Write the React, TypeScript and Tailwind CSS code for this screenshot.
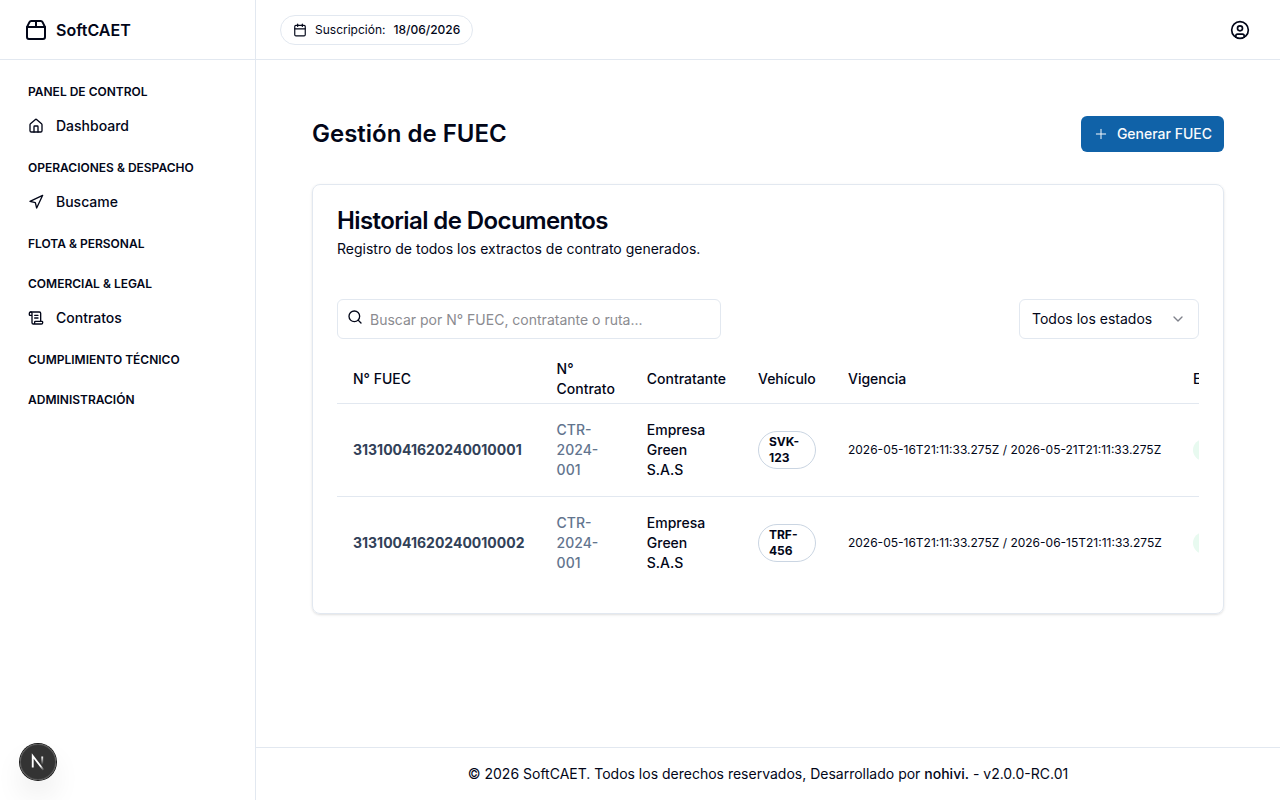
import { Calendar, ChevronDown, CircleUser, Home, Navigation, Package2, Plus, ScrollText, Search } from 'lucide-react'
import type { LucideIcon } from 'lucide-react'

type NavItem = { label: string; icon: LucideIcon }
type NavGroup = { title: string; items: NavItem[] }

type Fuec = {
  numero: string
  contrato: string
  contratante: string
  placa: string
  inicio: string
  fin: string
  estado: string
}

const navGroups: NavGroup[] = [
  { title: 'Panel de Control', items: [{ label: 'Dashboard', icon: Home }] },
  { title: 'Operaciones & Despacho', items: [{ label: 'Buscame', icon: Navigation }] },
  { title: 'Flota & Personal', items: [] },
  { title: 'Comercial & Legal', items: [{ label: 'Contratos', icon: ScrollText }] },
  { title: 'Cumplimiento Técnico', items: [] },
  { title: 'Administración', items: [] },
]

const fuecs: Fuec[] = [
  {
    numero: '31310041620240010001',
    contrato: 'CTR-2024-001',
    contratante: 'Empresa Green S.A.S',
    placa: 'SVK-123',
    inicio: '2026-05-16T21:11:33.275Z',
    fin: '2026-05-21T21:11:33.275Z',
    estado: 'Activo',
  },
  {
    numero: '31310041620240010002',
    contrato: 'CTR-2024-001',
    contratante: 'Empresa Green S.A.S',
    placa: 'TRF-456',
    inicio: '2026-05-16T21:11:33.275Z',
    fin: '2026-06-15T21:11:33.275Z',
    estado: 'Activo',
  },
]

function Sidebar() {
  return (
    <aside className="flex w-64 shrink-0 flex-col border-r border-slate-200">
      <div className="flex h-[60px] items-center gap-2 border-b border-slate-200 px-6 font-semibold">
        <Package2 className="h-6 w-6" />
        <span>SoftCAET</span>
      </div>
      <nav className="flex flex-col gap-2 px-4 py-4 text-sm font-medium">
        {navGroups.map(group => (
          <div key={group.title}>
            <h4 className="flex h-8 items-center px-3 text-xs font-semibold uppercase">{group.title}</h4>
            {group.items.map(item => (
              <a key={item.label} href="#" className="flex h-9 items-center gap-3 rounded-lg px-3">
                <item.icon className="h-4 w-4" />
                {item.label}
              </a>
            ))}
          </div>
        ))}
      </nav>
    </aside>
  )
}

function Header() {
  return (
    <header className="flex h-[60px] shrink-0 items-center justify-between border-b border-slate-200 px-6">
      <div className="flex items-center gap-2 rounded-full border border-slate-200 px-3 py-1.5 text-xs">
        <Calendar className="h-3.5 w-3.5" />
        <span>Suscripción:</span>
        <span className="font-medium">18/06/2026</span>
      </div>
      <button className="flex h-8 w-8 items-center justify-center rounded-full">
        <CircleUser className="h-5 w-5" />
      </button>
    </header>
  )
}

function FuecTable() {
  return (
    <div className="overflow-hidden">
      <table className="w-[1080px] table-fixed text-left text-sm">
        <colgroup>
          <col className="w-[203.6px]" />
          <col className="w-[90.2px]" />
          <col className="w-[111.2px]" />
          <col className="w-[90px]" />
          <col className="w-[345px]" />
          <col />
        </colgroup>
        <thead>
          <tr className="border-b border-slate-200">
            <th className="h-12 px-4 font-medium">N° FUEC</th>
            <th className="h-12 px-4 font-medium">N° Contrato</th>
            <th className="h-12 px-4 font-medium">Contratante</th>
            <th className="h-12 px-4 font-medium">Vehículo</th>
            <th className="h-12 px-4 font-medium">Vigencia</th>
            <th className="h-12 px-4 font-medium">Estado</th>
          </tr>
        </thead>
        <tbody>
          {fuecs.map(fuec => (
            <tr key={fuec.numero} className="border-b border-slate-200 last:border-0">
              <td className="p-4 font-bold text-slate-700">{fuec.numero}</td>
              <td className="p-4 font-medium text-slate-500">{fuec.contrato}</td>
              <td className="p-4 font-medium">{fuec.contratante}</td>
              <td className="p-4">
                <div className="inline-flex items-center rounded-full border border-slate-300 px-2.5 py-0.5 align-middle text-xs font-bold">
                  {fuec.placa}
                </div>
              </td>
              <td className="whitespace-nowrap p-4 text-xs">
                {fuec.inicio} / {fuec.fin}
              </td>
              <td className="p-4">
                <div className="inline-flex items-center rounded-full border border-transparent bg-[#e8faf0] px-2.5 py-0.5 align-middle text-xs font-semibold text-emerald-700">
                  {fuec.estado}
                </div>
              </td>
            </tr>
          ))}
        </tbody>
      </table>
    </div>
  )
}

function DevBadge() {
  return (
    <div className="fixed bottom-5 left-5 flex h-9 w-9 items-center justify-center rounded-full bg-black/80 shadow-[0_0_0_1px_#171717,inset_0_0_0_1px_rgba(255,255,255,0.14),0_16px_32px_-8px_rgba(0,0,0,0.24)]">
      <svg className="h-10 w-10 shrink-0" viewBox="0 0 40 40" fill="none">
        <g transform="translate(12.4 13)">
          <path d="M13.3 15.2 L2.34 1 V12.6" stroke="url(#diagonal)" strokeWidth="1.86" />
          <path d="M11.825 1.5 V13.1" stroke="url(#stem)" strokeWidth="1.86" />
        </g>
        <defs>
          <linearGradient id="diagonal" x1="9.955" y1="11.12" x2="15.478" y2="17.967" gradientUnits="userSpaceOnUse">
            <stop stopColor="white" />
            <stop offset="0.604" stopColor="white" stopOpacity="0" />
          </linearGradient>
          <linearGradient id="stem" x1="11.822" y1="1.4" x2="11.791" y2="9.625" gradientUnits="userSpaceOnUse">
            <stop stopColor="white" />
            <stop offset="1" stopColor="white" stopOpacity="0" />
          </linearGradient>
        </defs>
      </svg>
    </div>
  )
}

export default function App() {
  return (
    <div className="flex h-screen overflow-hidden bg-white font-['Inter',sans-serif] text-slate-950">
      <Sidebar />
      <div className="flex min-w-0 flex-1 flex-col">
        <Header />
        <main className="flex flex-1 flex-col gap-8 p-14">
          <div className="flex items-center justify-between">
            <h1 className="text-2xl font-semibold">Gestión de FUEC</h1>
            <button className="flex h-9 items-center gap-2 rounded-md bg-[#1062a8] px-3 text-sm font-medium text-slate-50">
              <Plus className="h-4 w-4" strokeWidth={1.5} />
              Generar FUEC
            </button>
          </div>
          <section className="rounded-lg border border-slate-200 shadow-sm">
            <div className="flex flex-col gap-1.5 p-6">
              <h3 className="text-2xl font-semibold leading-none tracking-tight">Historial de Documentos</h3>
              <p className="text-sm">Registro de todos los extractos de contrato generados.</p>
            </div>
            <div className="p-6 pt-0">
              <div className="flex items-center justify-between py-4">
                <div className="relative w-96">
                  <Search className="absolute left-2.5 top-2.5 h-4 w-4" />
                  <input
                    className="h-10 w-full rounded-md border border-slate-200 pl-8 pr-3 text-sm placeholder:text-[#8b8b90]"
                    placeholder="Buscar por N° FUEC, contratante o ruta..."
                  />
                </div>
                <button className="flex h-10 w-[180px] items-center justify-between rounded-md border border-slate-200 px-3 text-sm">
                  Todos los estados
                  <ChevronDown className="h-4 w-4 opacity-50" />
                </button>
              </div>
              <FuecTable />
            </div>
          </section>
        </main>
        <footer className="shrink-0 border-t border-slate-200 py-4 text-center text-sm">
          © 2026 SoftCAET. Todos los derechos reservados, Desarrollado por <span className="font-medium">nohivi.</span> - v2.0.0-RC.01
        </footer>
      </div>
      <DevBadge />
    </div>
  )
}
